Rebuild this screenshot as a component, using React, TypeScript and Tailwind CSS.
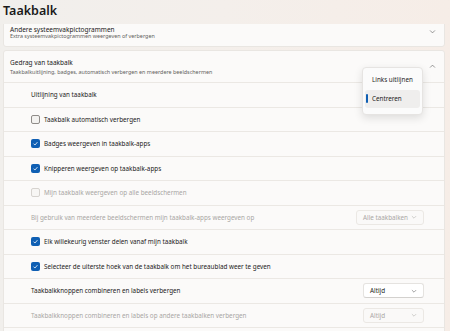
import React from "react";

const font = { fontFamily: '"Noto Sans", "Open Sans", sans-serif' };

function Check({ checked, disabled }: { checked?: boolean; disabled?: boolean }) {
  if (checked) {
    return (
      <div className="w-[9px] h-[9px] rounded-[2px] bg-[#0f5fb3] flex items-center justify-center shrink-0">
        <svg width="7" height="7" viewBox="0 0 10 10">
          <polyline points="2.2,5.2 4.2,7.2 7.8,3" fill="none" stroke="#ffffff" strokeWidth="1.1" />
        </svg>
      </div>
    );
  }
  return (
    <div
      className={
        disabled
          ? "w-[9px] h-[9px] rounded-[2px] border border-[#d6d3cf] bg-[#f7f6f4] shrink-0"
          : "w-[9px] h-[9px] rounded-[2px] border border-[#8f8c89] bg-[#f3f2f0] shrink-0"
      }
    />
  );
}

function Chevron({ up, color = "#6b6b6b", size = 7 }: { up?: boolean; color?: string; size?: number }) {
  return (
    <svg width={size} height={size} viewBox="0 0 10 10">
      <polyline
        points={up ? "1.5,6.5 5,3 8.5,6.5" : "1.5,3.5 5,7 8.5,3.5"}
        fill="none"
        stroke={color}
        strokeWidth="1"
      />
    </svg>
  );
}

function Row({ children }: { children: React.ReactNode }) {
  return (
    <div className="h-[24.5px] border-t border-[#ebe8e4] flex items-center pl-[27px] pr-[20px]">
      {children}
    </div>
  );
}

function CheckRow({ label, checked, disabled }: { label: string; checked?: boolean; disabled?: boolean }) {
  return (
    <Row>
      <div className="flex items-center gap-[4px]">
        <Check checked={checked} disabled={disabled} />
        <span className={disabled ? "text-[6.3px] text-[#a9a7a4]" : "text-[6.3px] text-[#1b1b1b]"}>{label}</span>
      </div>
    </Row>
  );
}

function Select({ label, width, disabled }: { label: string; width: string; disabled?: boolean }) {
  return (
    <div
      className={
        (disabled
          ? "border border-[#ebe8e4] bg-[#faf9f8] text-[#aaa8a5] "
          : "border border-[#e5e3e0] border-b-[#d3d1ce] bg-[#ffffff] text-[#1b1b1b] ") +
        width +
        " h-[15px] rounded-[3px] flex items-center justify-between pl-[6px] pr-[6px] text-[6.3px]"
      }
    >
      <span>{label}</span>
      <Chevron color={disabled ? "#b5b3b0" : "#666"} size={6} />
    </div>
  );
}

export default function App() {
  return (
    <div
      className="w-[450px] h-[331px] overflow-hidden relative bg-gradient-to-r from-[#f1efec] via-[#f4efeb] to-[#f6ede7]"
      style={font}
    >
      <div className="h-[24px] pl-[3px] pt-[2px]">
        <div className="text-[12.5px] font-semibold text-[#1a1a1a] leading-[18px]">Taakbalk</div>
      </div>
      <div className="h-[307px] overflow-hidden pl-[3px] pr-[5px] flex flex-col gap-[3px]">
        <div className="mt-[-9px] h-[32px] shrink-0 rounded-[3px] border border-[#e9e6e2] bg-[#fbfaf9] flex items-center pl-[6px] pr-[8px]">
          <div className="flex-1 flex flex-col leading-[7.5px] pt-[4px]">
            <span className="text-[6.5px] text-[#1b1b1b]">Andere systeemvakpictogrammen</span>
            <span className="text-[5.4px] text-[#5f5e5c]">Extra systeemvakpictogrammen weergeven of verbergen</span>
          </div>
          <Chevron />
        </div>
        <div className="shrink-0 rounded-[3px] border border-[#e9e6e2] bg-[#fbfaf9] flex flex-col">
          <div className="h-[31px] flex items-center pl-[6px] pr-[8px]">
            <div className="flex-1 flex flex-col leading-[8.5px] pt-[2px]">
              <span className="text-[6.5px] text-[#1b1b1b]">Gedrag van taakbalk</span>
              <span className="text-[5.4px] text-[#5f5e5c]">
                Taakbalkuitlijning, badges, automatisch verbergen en meerdere beeldschermen
              </span>
            </div>
            <Chevron up />
          </div>
          <Row>
            <span className="text-[6.3px] text-[#1b1b1b]">Uitlijning van taakbalk</span>
          </Row>
          <CheckRow label="Taakbalk automatisch verbergen" />
          <CheckRow label="Badges weergeven in taakbalk-apps" checked />
          <CheckRow label="Knipperen weergeven op taakbalk-apps" checked />
          <CheckRow label="Mijn taakbalk weergeven op alle beeldschermen" disabled />
          <Row>
            <div className="flex-1 text-[6.3px] text-[#a9a7a4]">
              Bij gebruik van meerdere beeldschermen mijn taakbalk-apps weergeven op
            </div>
            <Select label="Alle taakbalken" width="w-[68px]" disabled />
          </Row>
          <CheckRow label="Elk willekeurig venster delen vanaf mijn taakbalk" checked />
          <CheckRow label="Selecteer de uiterste hoek van de taakbalk om het bureaublad weer te geven" checked />
          <Row>
            <div className="flex-1 text-[6.3px] text-[#1b1b1b]">Taakbalkknoppen combineren en labels verbergen</div>
            <Select label="Altijd" width="w-[61px]" />
          </Row>
          <Row>
            <div className="flex-1 text-[6.3px] text-[#a9a7a4]">
              Taakbalkknoppen combineren en labels op andere taakbalken verbergen
            </div>
            <Select label="Altijd" width="w-[61px]" disabled />
          </Row>
          <Row>
            <span />
          </Row>
        </div>
      </div>
      <div className="absolute left-[362px] top-[67px] w-[61px] h-[48px] rounded-[4px] bg-[#fbfbfb] border border-[#e6e4e2] shadow-[0_3px_8px_rgba(0,0,0,0.12)] flex flex-col px-[2px] pt-[2px]">
        <div className="h-[19px] flex items-center pl-[7px] text-[6.3px] text-[#1b1b1b]">Links uitlijnen</div>
        <div className="h-[18px] mt-[1px] rounded-[3px] bg-[#efeeed] flex items-center relative pl-[7px] text-[6.3px] text-[#1b1b1b]">
          <div className="absolute left-[1px] top-[4px] w-[1.5px] h-[9px] rounded-full bg-[#0f5fb3]" />
          Centreren
        </div>
      </div>
    </div>
  );
}
